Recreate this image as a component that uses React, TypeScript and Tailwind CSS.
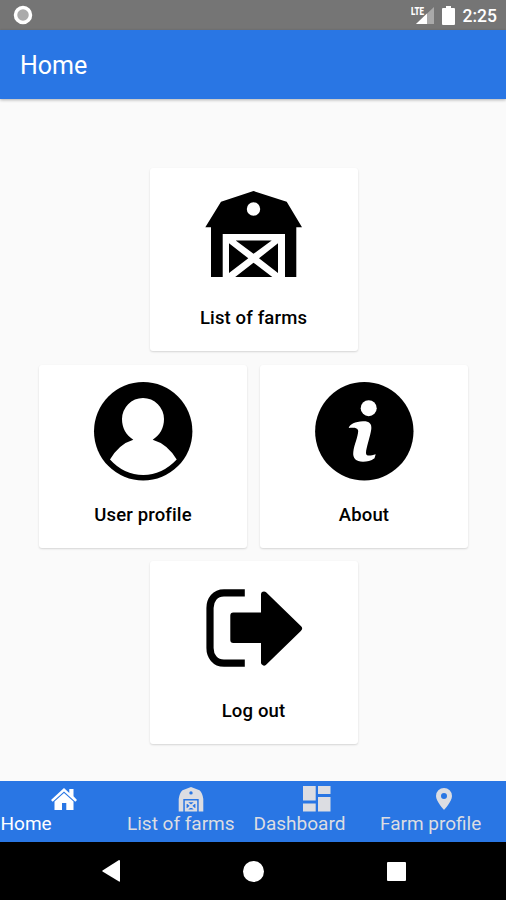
import { useState } from "react";

function BarnIcon({ className }: { className?: string }) {
  return (
    <svg viewBox="0 0 100 104" className={className} fill="currentColor">
      <path
        fillRule="evenodd"
        d="M49.5 10 82.7 20.7 98 46.3H92.3V96H81V53H18.7V96H7V46.3H1.3L17 20.7ZM49.5 21.3a6.7 6.7 0 1 0 0 13.4a6.7 6.7 0 1 0 0-13.4Z"
      />
      <path d="M31.7 59.6H67.7L49.5 72.8ZM25 62.3 44.3 77.3 25 92ZM74 62.3 55 77.3 74 92ZM31.2 96H68.3L49.5 81.7Z" />
    </svg>
  );
}

function UserIcon({ className }: { className?: string }) {
  return (
    <svg viewBox="0 0 100 104" className={className}>
      <circle cx="50.2" cy="53.3" r="49.2" />
      <path
        fill="#fff"
        d="M40.3 61.7C33 57 29 50 29 41A21 21 0 0 1 71 41C71 50 67 57 59.7 61.7Q74.5 66 83.7 81.5Q69 97 50.3 97Q31 97 17 81.5Q26 66 40.3 61.7Z"
      />
    </svg>
  );
}

function InfoIcon({ className }: { className?: string }) {
  return (
    <svg viewBox="0 0 100 104" className={className}>
      <circle cx="50.3" cy="53.3" r="49.2" />
      <circle cx="54.7" cy="30.2" r="8" fill="#fff" />
      <path
        fill="#fff"
        d="M34.7 50C36 46 41 43.5 49 43.2C55 43 58 45.5 57.3 51C56.5 58 52 70 52 75C52 79 57 77.5 61.7 76.3L60.5 80.3C57 83 53 83.7 49 83.8C42 83.8 38.5 80 39.3 74C40 67 44 59 44.2 53C44 49.5 39 49.5 34.7 50Z"
      />
    </svg>
  );
}

function LogoutIcon({ className }: { className?: string }) {
  return (
    <svg viewBox="0 0 100 104" className={className}>
      <path
        d="M40.8 18.9H20C11 18.9 6 26 6 34V74C6 82 11 89.2 20 89.2H40.8"
        fill="none"
        stroke="#000"
        strokeWidth="7.2"
      />
      <path
        d="M29.3 41.5H60V20.5L95 54.5 60 88.5V66H29.3Z"
        stroke="#000"
        strokeWidth="6"
        strokeLinejoin="round"
      />
    </svg>
  );
}

function HomeIcon({ className }: { className?: string }) {
  return (
    <svg viewBox="0 0 26 24" className={className} fill="currentColor">
      <path d="M13 1 18.3 5.9V2H22.5V9.3L26 13 24.3 14.8 13 4.5 1.7 14.8 0 13Z" />
      <path d="M13 6 22.5 14.5V23H15.3V16H11V23H3.5V14.5Z" />
    </svg>
  );
}

function SmallBarnIcon({ className }: { className?: string }) {
  return (
    <svg viewBox="0 0 26 25" className={className} fill="currentColor">
      <path
        fillRule="evenodd"
        d="M13 0 21.5 3.3Q24.5 6 25.3 12V24.5H20.7V12H5.3V24.5H.7V12Q1.500 6 4.5 3.3ZM13 4.2a1.7 1.7 0 1 0 0 3.4a1.7 1.7 0 1 0 0-3.4Z"
      />
      <path
        d="M7.700 14.300H18.300V23.500H7.700ZM7.700 14.300 18.300 23.500M18.300 14.300 7.700 23.500"
        fill="none"
        stroke="currentColor"
        strokeWidth="1.800"
      />
    </svg>
  );
}

function DashboardIcon({ className }: { className?: string }) {
  return (
    <svg viewBox="0 0 28 26" className={className} fill="currentColor">
      <path d="M0 0H12.7V14.5H0ZM15 0H27.5V8H15ZM0 17.5H12.7V25.5H0ZM15 11H27.5V25.5H15Z" />
    </svg>
  );
}

function PinIcon({ className }: { className?: string }) {
  return (
    <svg viewBox="0 0 16 22" className={className} fill="currentColor">
      <path
        fillRule="evenodd"
        d="M8 0A8 8 0 0 0 0 8C0 13.5 8 22 8 22S16 13.5 16 8A8 8 0 0 0 8 0ZM8 5a3 3 0 1 1 0 6a3 3 0 1 1 0-6Z"
      />
    </svg>
  );
}

type CardProps = {
  label: string;
  Icon: (props: { className?: string }) => React.ReactNode;
};

function Card({ label, Icon }: CardProps) {
  return (
    <button className="flex h-[183px] w-[208px] flex-col items-center rounded-[3px] bg-white pt-[13px] shadow-[0_1px_2px_rgba(0,0,0,0.15)]">
      <Icon className="h-[104px] w-[100px]" />
      <span className="mt-[21px] text-[18.5px] leading-6 font-medium tracking-[0.15px] whitespace-nowrap">
        {label}
      </span>
    </button>
  );
}

const tabs = [
  { label: "Home", Icon: HomeIcon, size: "h-6 w-[26px]" },
  { label: "List of farms", Icon: SmallBarnIcon, size: "h-[25px] w-[26px]" },
  { label: "Dashboard", Icon: DashboardIcon, size: "h-[26px] w-7" },
  { label: "Farm profile", Icon: PinIcon, size: "h-[22px] w-4" },
];

export default function App() {
  const [active, setActive] = useState("Home");

  return (
    <div className="flex h-[900px] w-[506px] flex-col overflow-hidden bg-[#fafafa] font-[Roboto,sans-serif] text-black">
      {/* Status bar */}
      <div className="flex h-[30px] shrink-0 items-center bg-[#757575] pr-[9px] pl-[13px] text-white">
        <svg viewBox="0 0 20 20" className="h-5 w-5">
          <circle cx="10" cy="10" r="7.5" fill="#aaa" stroke="#fff" strokeWidth="3.5" />
        </svg>
        <svg viewBox="0 0 24 20" className="ml-auto h-5 w-6">
          <path d="M23 2V19H5Z" fill="#a9a9a9" />
          <path d="M16 8.5V19H5Z" fill="#fff" />
          <path d="M0 0H13.5V10H0Z" fill="#757575" />
          <text x="0" y="9.5" fill="#fff" fontSize="11" fontWeight="900" textLength="13" lengthAdjust="spacingAndGlyphs">
            LTE
          </text>
        </svg>
        <svg viewBox="0 0 13 19" className="ml-[7px] h-[19px] w-[13px]" fill="#fff">
          <path d="M4 0H9V2H12Q13 2 13 3V18Q13 19 12 19H1Q0 19 0 18V3Q0 2 1 2H4Z" />
        </svg>
        <span className="ml-2 pt-0.5 text-[17.5px] leading-5 font-medium">2:25</span>
      </div>

      <header className="z-10 flex h-[69px] shrink-0 items-center bg-[#2976e4] pt-[3px] pl-5 shadow-[0_1px_3px_rgba(0,0,0,0.3)]">
        <h1 className="text-[25px] leading-8 text-white">Home</h1>
      </header>

      {/* Menu */}
      <main className="flex flex-1 flex-col items-center gap-[13.5px] pt-[69px] pl-px">
        <Card label="List of farms" Icon={BarnIcon} />
        <div className="flex gap-[13px]">
          <Card label="User profile" Icon={UserIcon} />
          <Card label="About" Icon={InfoIcon} />
        </div>
        <Card label="Log out" Icon={LogoutIcon} />
      </main>

      <nav className="grid h-[61px] shrink-0 grid-cols-4 bg-[#2976e4]">
        {tabs.map(({ label, Icon, size }) => (
          <button
            key={label}
            onClick={() => setActive(label)}
            className={label === active ? "text-white" : "text-[#dcdde2]"}
          >
            <span className="flex h-[31px] items-center justify-center pt-[5px] pl-[2px]">
              <Icon className={size} />
            </span>
            <span className="block h-[30px] pl-[0.5px] text-left text-[19px] leading-[24px] whitespace-nowrap">
              {label}
            </span>
          </button>
        ))}
      </nav>

      {/* System buttons */}
      <div className="flex h-[58px] shrink-0 items-center justify-between bg-black pr-[100px] pl-[102px]">
        <svg viewBox="0 0 18 22" className="h-[22px] w-[18px]" fill="#fff">
          <path d="M17 0Q18 0 18 1V21Q18 22 17 21.5L.5 11.5Q0 11 .5 10.5Z" />
        </svg>
        <span className="h-[21px] w-[21px] rounded-full bg-white" />
        <span className="h-[19px] w-[19px] rounded-[1px] bg-white" />
      </div>
    </div>
  );
}
